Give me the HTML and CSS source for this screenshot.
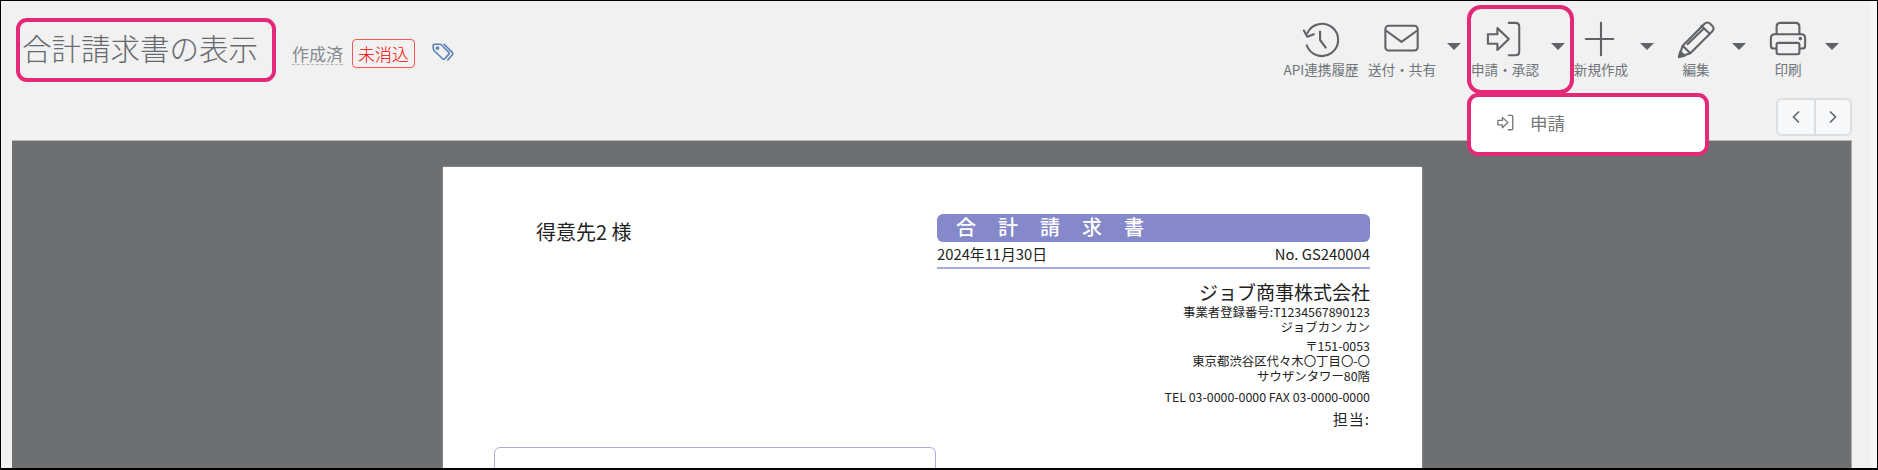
FILE: index.html
```html
<!DOCTYPE html>
<html lang="ja">
<head>
    <meta charset="UTF-8">
    <title>合計請求書の表示</title>
    <link rel="stylesheet" href="styles.css">
</head>
<body>
    <div class="frame">
        <div class="topbar">
            <div class="heading">
                <h1 class="title">合計請求書の表示</h1>
                <span class="state">作成済</span>
                <span class="badge">未消込</span>
                <svg class="tag-icon" viewBox="0 0 22 18" fill="none" stroke="#5b80b8" stroke-width="1.5" stroke-linejoin="round" stroke-linecap="round">
                    <path d="M1 2.5 Q1 1 2.5 1 H8 L15.5 8.5 Q16 9.5 15.5 10 L11.5 14.5 Q10.5 15 10 14.5 L1.5 6.5 Z"/>
                    <path d="M11 1 L18.8 8.7 Q19.5 9.5 18.8 10.3 L14.5 15.5"/>
                    <circle cx="5" cy="4.5" r="1"/>
                </svg>
            </div>
            <div class="tools">
                <button class="tool">
                    <svg class="tool-icon" viewBox="0 0 40 40" fill="none" stroke="#5f6368" stroke-width="2.2" stroke-linecap="round" stroke-linejoin="round">
                        <path d="M5.5 13 A17 17 0 1 1 5 25.5"/>
                        <path d="M2 10 L5.5 16.5 L12.5 14"/>
                        <path d="M19 11 V20 L25 28"/>
                    </svg>
                    <span>API連携履歴</span>
                </button>
                <button class="tool">
                    <svg class="tool-icon" viewBox="0 0 40 40" fill="none" stroke="#5f6368" stroke-width="2.2" stroke-linejoin="round">
                        <rect x="2.5" y="5" width="34" height="26" rx="3.5"/>
                        <path d="M3 10 L19.5 22 L36 10"/>
                    </svg>
                    <span>送付・共有</span>
                </button>
                <i class="caret"></i>
                <button class="tool">
                    <svg class="tool-icon" viewBox="0 0 40 40" fill="none" stroke="#5f6368" stroke-width="2.2" stroke-linejoin="round" stroke-linecap="round">
                        <path d="M2 14 H12 V7.5 L24 19 L12 30.5 V24 H2 Z"/>
                        <path d="M24 2 H31 Q35 2 35 6 V32 Q35 36 31 36 H24"/>
                    </svg>
                    <span>申請・承認</span>
                </button>
                <i class="caret"></i>
                <button class="tool">
                    <svg class="tool-icon" viewBox="0 0 40 40" fill="none" stroke="#5f6368" stroke-width="2.2" stroke-linecap="round">
                        <path d="M20 2 V36"/>
                        <path d="M4 19 H33"/>
                    </svg>
                    <span>新規作成</span>
                </button>
                <i class="caret"></i>
                <button class="tool">
                    <svg class="tool-icon" viewBox="0 0 40 40" fill="none" stroke="#5f6368" stroke-width="2.2" stroke-linejoin="round">
                        <path d="M2 38 L6 26 L29 3 Q32 0 35 3 L37 5 Q40 8 37 11 L14 34 Z"/>
                        <path d="M6 26 L14 34 M10.5 25 L29 7 M25 4.5 L35 14"/>
                        <path d="M2 38 L3.5 32 L8 36.5 Z" fill="#5f6368"/>
                    </svg>
                    <span>編集</span>
                </button>
                <i class="caret"></i>
                <button class="tool">
                    <svg class="tool-icon" viewBox="0 0 40 40" fill="none" stroke="#5f6368" stroke-width="2.2" stroke-linejoin="round">
                        <path d="M8 14 V6 Q8 2 12 2 H28 Q32 2 32 6 V14"/>
                        <path d="M8 29 H5 Q2 29 2 26 V18 Q2 14 6 14 H34 Q38 14 38 18 V26 Q38 29 35 29 H32"/>
                        <rect x="8" y="23" width="24" height="12" rx="2"/>
                        <circle cx="33" cy="18.5" r="0.8" fill="#5f6368"/>
                    </svg>
                    <span>印刷</span>
                </button>
                <i class="caret"></i>
            </div>
        </div>

        <div class="pager">
            <button class="pager-btn">
                <svg viewBox="0 0 10 14" fill="none" stroke="#5f6368" stroke-width="1.6"><path d="M8 1.5 L2.5 7 L8 12.5"/></svg>
            </button>
            <button class="pager-btn">
                <svg viewBox="0 0 10 14" fill="none" stroke="#5f6368" stroke-width="1.6"><path d="M2 1.5 L7.5 7 L2 12.5"/></svg>
            </button>
        </div>

        <div class="viewer">
            <div class="sheet">
                <div class="sheet-top">
                    <p class="client">得意先2 様</p>
                    <div class="issuer">
                        <div class="doc-title">合計請求書</div>
                        <div class="doc-meta">
                            <span>2024年11月30日</span>
                            <span>No. GS240004</span>
                        </div>
                        <div class="company">ジョブ商事株式会社</div>
                        <div class="small">事業者登録番号:T1234567890123</div>
                        <div class="small">ジョブカン カン</div>
                        <div class="small address">〒151-0053</div>
                        <div class="small">東京都渋谷区代々木〇丁目〇-〇</div>
                        <div class="small">サウザンタワー80階</div>
                        <div class="small phone">TEL 03-0000-0000 FAX 03-0000-0000</div>
                        <div class="staff">担当:</div>
                    </div>
                </div>
                <div class="sum-box"></div>
            </div>
        </div>

        <!-- 説明用の枠とドロップダウン -->
        <div class="mark mark-title"></div>
        <div class="mark mark-tool"></div>
        <div class="menu">
            <svg class="menu-icon" viewBox="0 0 40 40" fill="none" stroke="#777" stroke-width="3" stroke-linejoin="round">
                <path d="M2 14 H12 V7.5 L24 19 L12 30.5 V24 H2 Z"/>
                <path d="M24 3 H33 Q35 3 35 6 V32 Q35 35 33 35 H24"/>
            </svg>
            <span>申請</span>
        </div>
    </div>
</body>
</html>
```

FILE: styles.css
```css
html, body {
    margin: 0;
    height: 100%;
    overflow: hidden;
}
body {
    font-family: "Noto Sans CJK JP", "Noto Sans", sans-serif;
    color: #222;
}
.frame {
    position: relative;
    box-sizing: border-box;
    width: 1878px;
    height: 470px;
    display: flex;
    flex-direction: column;
    background: #f1f1f1;
    border: 1px solid #000;
    border-width: 1px 1px 2px 1px;
    box-shadow: inset -6px 0 #f7f7f7;
    padding-left: 11px;
    padding-right: 25px;
    overflow: hidden;
}
.topbar {
    display: flex;
    justify-content: space-between;
    height: 88px;
    flex-shrink: 0;
    margin-left: -11px;
    margin-right: -25px;
    padding-right: 39px;
}
.heading {
    display: flex;
    align-items: flex-start;
    padding-left: 21px;
}
.title {
    margin: 32px 0 0;
    font-size: 29.5px;
    font-weight: 300;
    color: #666a6f;
    line-height: 1;
    width: 270px;
}
.state {
    margin-top: 42px;
    font-size: 17px;
    color: #858a8e;
    border-bottom: 1px dashed #b5b5b5;
    line-height: 21px;
}
.badge {
    margin-left: 9px;
    margin-top: 38px;
    padding: 0 5px;
    font-size: 17px;
    font-weight: 300;
    line-height: 27px;
    color: #f00;
    border: 1.5px solid #f55;
    border-radius: 4px;
}
.tag-icon {
    width: 24px;
    height: 20px;
    margin-left: 17px;
    margin-top: 42px;
}
.tools {
    display: grid;
    grid-template-columns: 82px 80px 24px 78px 28px 58px 34px 64px 22px 76px 12px;
    align-items: start;
    padding-top: 20px;
}
.tool {
    display: flex;
    flex-direction: column;
    align-items: center;
    padding: 0;
    border: none;
    background: none;
    font: inherit;
    font-size: 13.6px;
    line-height: 18px;
    color: #6f7479;
    white-space: nowrap;
}
.tool span {
    margin-top: 1px;
}
.tool-icon {
    width: 38px;
    height: 38px;
}
.caret {
    justify-self: center;
    width: 0;
    height: 0;
    margin-top: 22px;
    border-left: 7px solid transparent;
    border-right: 7px solid transparent;
    border-top: 7px solid #5f6368;
}
.pager {
    align-self: flex-end;
    display: flex;
    box-sizing: border-box;
    height: 38px;
    margin-top: 9px;
    margin-bottom: 4px;
    border: 2px solid #dcdfe1;
    border-radius: 6px;
    background: #f6f8f9;
    flex-shrink: 0;
}
.pager-btn {
    width: 36px;
    padding: 0;
    border: none;
    background: none;
    display: flex;
    align-items: center;
    justify-content: center;
}
.pager-btn + .pager-btn {
    border-left: 2px solid #dcdfe1;
}
.pager-btn svg {
    width: 10px;
    height: 14px;
}
.viewer {
    flex: 1;
    background: #6d7072;
    border-top: 1px solid #b9b9b9;
    border-right: 1px solid #a9a9a9;
    overflow: hidden;
    min-height: 0;
    padding: 26px 429px 0 431px;
}
.sheet {
    background: #fff;
    height: 600px;
    padding: 47px 52px 0 51px;
    box-shadow: 0 0 2px #aaa;
}
.sheet-top {
    display: flex;
    justify-content: space-between;
    height: 233px;
}
.client {
    margin: 5px 0 0 42px;
    font-size: 20px;
    line-height: 26px;
    color: #222;
}
.issuer {
    width: 433px;
    text-align: right;
    color: #222;
}
.doc-title {
    height: 28px;
    box-sizing: border-box;
    padding-left: 19px;
    background: #8589c9;
    border-radius: 6px;
    color: #fff;
    text-align: left;
    font-size: 20px;
    font-weight: 500;
    line-height: 26px;
    letter-spacing: 22px;
}
.doc-meta {
    display: flex;
    justify-content: space-between;
    height: 25px;
    border-bottom: 2px solid #aaacdd;
    font-size: 14.8px;
    line-height: 24px;
}
.company {
    margin-top: 10px;
    font-size: 19px;
    line-height: 26px;
}
.small {
    font-size: 12.4px;
    line-height: 15px;
}
.address {
    margin-top: 4px;
}
.phone {
    margin-top: 6px;
}
.staff {
    margin-top: 2px;
    font-size: 15px;
    line-height: 24px;
    letter-spacing: 1px;
}
.sum-box {
    width: 442px;
    height: 100px;
    box-sizing: border-box;
    border: 1.5px solid #aaacdd;
    border-radius: 6px;
}
.mark {
    position: absolute;
    box-sizing: border-box;
    border: 4px solid #e32977;
    border-radius: 11px;
}
.mark-title {
    left: 15px;
    top: 17px;
    width: 260px;
    height: 64px;
}
.mark-tool {
    left: 1466px;
    top: 4px;
    width: 107px;
    height: 89px;
    border-radius: 14px;
}
.menu {
    position: absolute;
    left: 1466px;
    top: 92px;
    box-sizing: border-box;
    width: 242px;
    height: 63px;
    display: flex;
    align-items: center;
    padding-left: 26px;
    padding-bottom: 4px;
    background: #fff;
    border: 4px solid #e32977;
    border-radius: 11px;
    font-size: 17.5px;
    color: #777;
}
.menu-icon {
    width: 18px;
    height: 18px;
    margin-right: 15px;
}
```
